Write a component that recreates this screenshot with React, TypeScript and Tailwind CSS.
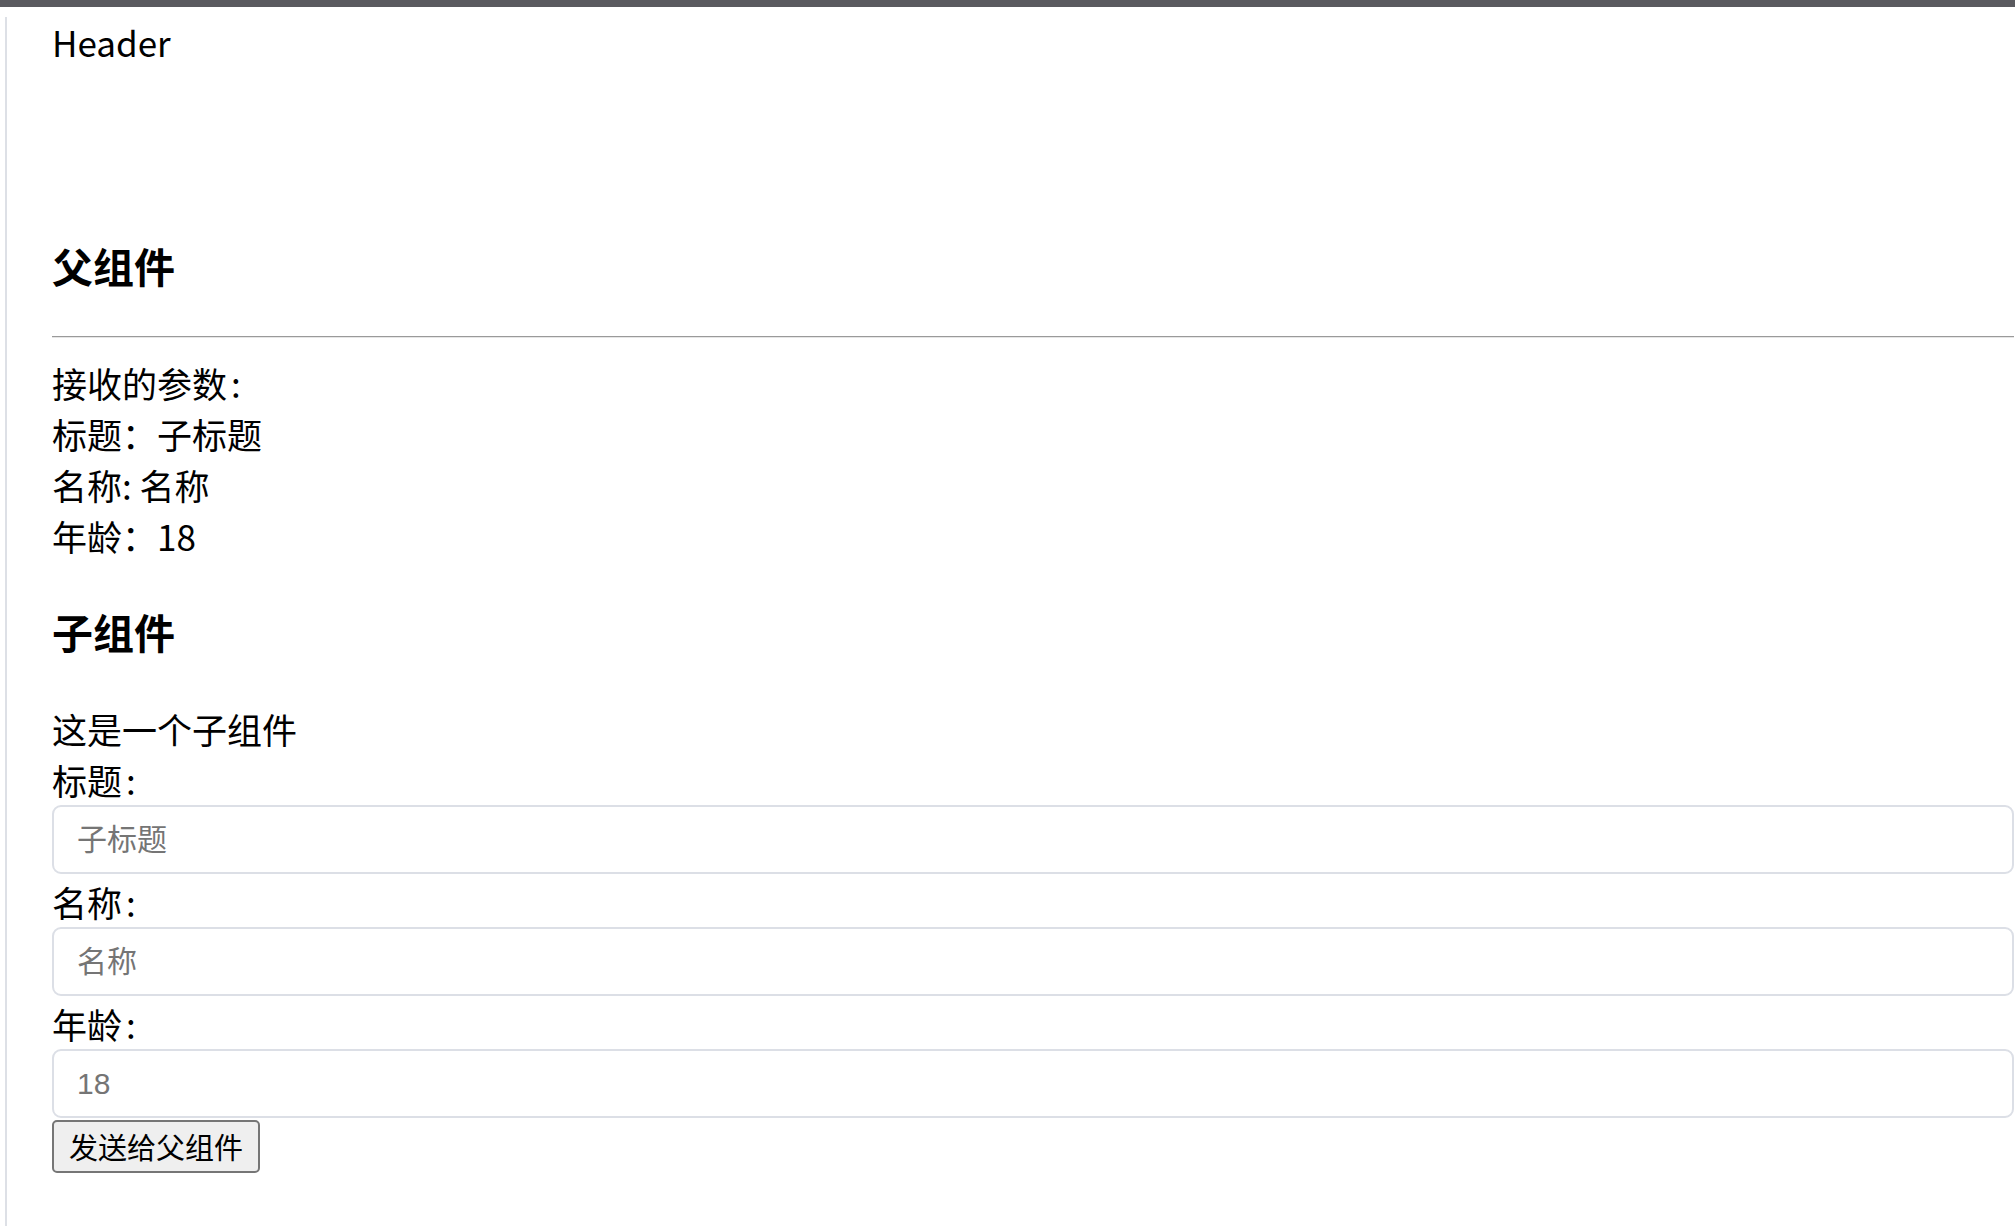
import React from 'react'

const fields = [
    { label: '标题', placeholder: '子标题' },
    { label: '名称', placeholder: '名称' },
    { label: '年龄', placeholder: '18' },
]

function Colon() {
    return <span className="pl-[4px]">:</span>
}

export default function App() {
    return (
        <div className="min-h-[1226px] bg-white text-black font-['Noto_Sans_CJK_SC',sans-serif]">
            <div className="h-[7px] bg-[#5a5a5f]" />
            <div className="mt-[10px] ml-[5px] min-h-[1209px] border-l-2 border-[#dde0e6] pl-[45px] pr-[1px]">
                <div className="h-[219px]">
                    <div className="pt-[5px] text-[35px] leading-[40px]">Header</div>
                </div>

                <h3 className="text-[41px] font-bold leading-[59px] mb-[41px]">父组件</h3>
                <div className="h-[2px] bg-[#9a9a9a] border-b border-[#e6e6e6] mb-[19px]" />

                <div className="text-[35px] leading-[51px]">
                    <div>接收的参数<Colon /></div>
                    <div>标题：子标题</div>
                    <div>名称: 名称</div>
                    <div>年龄：18</div>
                </div>

                <h3 className="mt-[41px] text-[41px] font-bold leading-[59px] mb-[42px]">子组件</h3>

                <div className="text-[35px] leading-[51px]">
                    <div>这是一个子组件</div>
                    {fields.map((f) => (
                        <div key={f.label} className="mb-[2px]">
                            <div>{f.label}<Colon /></div>
                            <input
                                type="text"
                                placeholder={f.placeholder}
                                className="block w-full h-[69px] rounded-[9px] border-2 border-[#dcdfe6] bg-white pl-[23px] text-[30px] font-['Liberation_Sans','Noto_Sans_CJK_SC',sans-serif] text-[#606266] placeholder:text-[#757575] outline-none"
                            />
                        </div>
                    ))}
                    <button className="flex items-center justify-center w-[208px] h-[53px] rounded-[5px] border-2 border-[#767676] bg-[#efefef] text-[29px] leading-none">
                        发送给父组件
                    </button>
                </div>
            </div>
        </div>
    )
}
